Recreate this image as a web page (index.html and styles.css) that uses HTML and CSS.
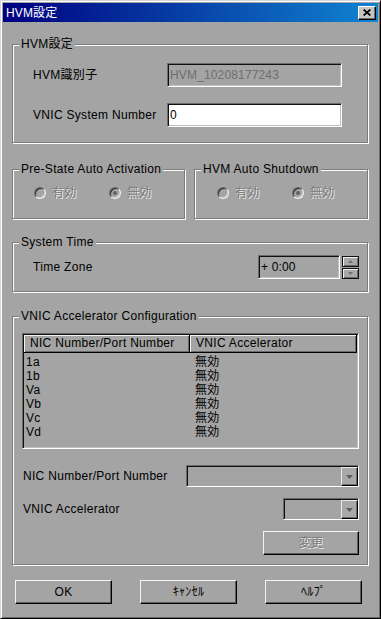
FILE: index.html
```html
<!DOCTYPE html>
<html lang="ja">
<head>
<meta charset="utf-8">
<title>HVM設定</title>
<link rel="stylesheet" href="styles.css">
</head>
<body>
<div class="window">
  <div class="titlebar">
    <span class="title">HVM設定</span>
    <div class="close"><svg width="8" height="7" viewBox="0 0 8 7"><path d="M0.6 0.5 L7.4 6.5 M7.4 0.5 L0.6 6.5" stroke="#000" stroke-width="1.7" fill="none"/></svg></div>
  </div>
  <div class="client">
    <div class="group g-hvm">
      <div class="gtitle">HVM設定</div>
      <div class="hvm-body">
        <div class="frow"><span class="flabel">HVM識別子</span><div class="field field-dis">HVM_10208177243</div></div>
        <div class="frow"><span class="flabel">VNIC System Number</span><div class="field field-white">0</div></div>
      </div>
    </div>

    <div class="pair">
      <div class="group g-left">
        <div class="gtitle">Pre-State Auto Activation</div>
        <div class="radios">
          <div class="ritem"><span class="rb"></span><span class="dis">有効</span></div>
          <div class="ritem"><span class="rb on"></span><span class="dis">無効</span></div>
        </div>
      </div>
      <div class="group g-right">
        <div class="gtitle">HVM Auto Shutdown</div>
        <div class="radios radios-r">
          <div class="ritem"><span class="rb"></span><span class="dis">有効</span></div>
          <div class="ritem"><span class="rb on"></span><span class="dis">無効</span></div>
        </div>
      </div>
    </div>

    <div class="group g-time">
      <div class="gtitle">System Time</div>
      <div class="time-body">
        <span class="tlabel">Time Zone</span>
        <div class="field tfield">+ 0:00</div>
        <div class="spin">
          <div class="sbtn"><svg width="5" height="3" viewBox="0 0 5 3"><path d="M0 3 L2.5 0 L5 3 Z" fill="#707070"/></svg></div>
          <div class="sbtn"><svg width="5" height="3" viewBox="0 0 5 3"><path d="M0 0 L5 0 L2.5 3 Z" fill="#707070"/></svg></div>
        </div>
      </div>
    </div>

    <div class="group g-acc">
      <div class="gtitle">VNIC Accelerator Configuration</div>
      <div class="acc-body">
        <div class="list">
          <div class="lhead">
            <div class="hcell hc1">NIC Number/Port Number</div>
            <div class="hcell hc2">VNIC Accelerator</div>
          </div>
          <div class="lrows">
            <div class="lrow"><span>1a</span><span>無効</span></div>
            <div class="lrow"><span>1b</span><span>無効</span></div>
            <div class="lrow"><span>Va</span><span>無効</span></div>
            <div class="lrow"><span>Vb</span><span>無効</span></div>
            <div class="lrow"><span>Vc</span><span>無効</span></div>
            <div class="lrow"><span>Vd</span><span>無効</span></div>
          </div>
        </div>
        <div class="crow crow1">
          <span class="clabel">NIC Number/Port Number</span>
          <div class="combo combo-wide"><div class="ddbtn"><svg width="7" height="4" viewBox="0 0 7 4"><path d="M0 0 L7 0 L3.5 4 Z" fill="#5c5c5c"/></svg></div></div>
        </div>
        <div class="crow crow2">
          <span class="clabel">VNIC Accelerator</span>
          <div class="combo combo-narrow"><div class="ddbtn"><svg width="7" height="4" viewBox="0 0 7 4"><path d="M0 0 L7 0 L3.5 4 Z" fill="#5c5c5c"/></svg></div></div>
        </div>
        <div class="brow">
          <div class="btn btn-change"><span class="dis">変更</span></div>
        </div>
      </div>
    </div>

    <div class="buttons">
      <div class="btn btn-main">OK</div>
      <div class="btn btn-main">ｷｬﾝｾﾙ</div>
      <div class="btn btn-main">ﾍﾙﾌﾟ</div>
    </div>
  </div>
</div>
</body>
</html>
```

FILE: styles.css
```css
* { box-sizing: border-box; }
html, body { margin: 0; padding: 0; }
body {
  width: 381px;
  height: 619px;
  background: #a4a4a4;
  color: #000;
  font-family: "Liberation Sans", "Noto Sans CJK JP", sans-serif;
  font-size: 12px;
  line-height: 14px;
  letter-spacing: 0.3px;
}

.window {
  width: 381px;
  height: 619px;
  background: #a4a4a4;
  border: 1px solid;
  border-color: #d6d6d6 #000 #000 #d6d6d6;
  box-shadow: inset 1px 1px 0 #fff, inset -1px -1px 0 #6a6a6a;
  padding: 2px;
  display: flex;
  flex-direction: column;
}

.titlebar {
  height: 19px;
  flex: none;
  background: linear-gradient(to right, #000080, #1084d0);
  display: flex;
  align-items: center;
  justify-content: space-between;
  padding: 0 2px 0 3px;
  color: #fff;
}
.title { line-height: 14px; letter-spacing: 0.15px; }
.close {
  width: 18px;
  height: 14px;
  background: #c4c4c4;
  border: 1px solid;
  border-color: #fff #000 #000 #fff;
  box-shadow: inset -1px -1px 0 #6a6a6a;
  display: flex;
  align-items: center;
  justify-content: center;
}
.close svg { display: block; }

.client {
  padding-left: 9px;
  display: flex;
  flex-direction: column;
}

.group {
  border: 1px solid #7c7c7c;
  box-shadow: inset 1px 1px 0 #fff, 1px 1px 0 #fff;
}
.gtitle {
  width: fit-content;
  margin: -8px 0 0 6px;
  padding: 0 2px;
  background: #a4a4a4;
  line-height: 14px;
  white-space: nowrap;
}

.g-hvm { width: 356px; margin-top: 22px; }
.hvm-body {
  padding: 12px 24px 15px 20px;
  display: flex;
  flex-direction: column;
  gap: 16px;
}
.frow { display: flex; align-items: center; height: 24px; }
.flabel { width: 134px; white-space: nowrap; }

.field {
  height: 24px;
  border: 1px solid;
  border-color: #6a6a6a #fff #fff #6a6a6a;
  box-shadow: inset 1px 1px 0 #101010, inset -1px -1px 0 #c0c0c0;
  padding: 0 0 0 2px;
  display: flex;
  align-items: center;
  white-space: nowrap;
  letter-spacing: 0.15px;
}
.field-dis { width: 175px; color: #6e6e6e; }
.field-white { width: 175px; background: #fff; }

.pair { display: flex; gap: 9px; margin-top: 26px; }
.g-left { width: 173px; }
.g-right { width: 174px; }
.radios { display: flex; padding: 10px 0 18px 21px; }
.radios-r { padding-left: 22px; }
.ritem { width: 76px; height: 14px; display: flex; align-items: center; gap: 6px; }
.rb {
  width: 12px;
  height: 12px;
  flex: none;
  border-radius: 50%;
  border: 1px solid;
  border-color: #6c6c6c #f4f4f4 #f4f4f4 #6c6c6c;
  box-shadow: inset 1px 1px 0 #2a2a2a, inset -1px -1px 0 #c4c4c4;
  background: #a4a4a4;
}
.rb.on::after {
  content: "";
  display: block;
  width: 4px;
  height: 4px;
  margin: 3px;
  border-radius: 50%;
  background: #646464;
}
.dis { color: #7a7a7a; text-shadow: 1px 1px 0 #ececec; }

.g-time { width: 356px; margin-top: 23px; }
.time-body {
  padding: 6px 8px 12px 20px;
  display: flex;
  align-items: flex-start;
  height: 42px;
}
.tlabel { flex: 1; line-height: 24px; }
.tfield { width: 82px; }
.spin {
  width: 17px;
  margin-left: 2px;
  margin-top: 1px;
  display: flex;
  flex-direction: column;
  gap: 1px;
}
.sbtn {
  height: 11px;
  border: 1px solid #111;
  background: #a8a8a8;
  box-shadow: inset 1px 1px 0 #f0f0f0, inset -1px -1px 0 #6a6a6a;
  display: flex;
  align-items: center;
  justify-content: center;
}
.sbtn svg { display: block; }

.g-acc { width: 356px; margin-top: 24px; }
.acc-body {
  padding: 10px 8px 9px 9px;
  display: flex;
  flex-direction: column;
}
.list {
  width: 337px;
  height: 116px;
  border: 1px solid;
  border-color: #6a6a6a #fff #fff #6a6a6a;
  box-shadow: inset 1px 1px 0 #101010, inset -1px -1px 0 #c0c0c0;
  padding: 1px;
}
.lhead { display: flex; height: 18px; }
.hcell {
  height: 18px;
  border-right: 1px solid #000;
  border-bottom: 1px solid #000;
  box-shadow: inset 1px 1px 0 #f4f4f4, inset -1px -1px 0 #6a6a6a;
  padding-left: 6px;
  line-height: 17px;
  white-space: nowrap;
}
.hc1 { width: 166px; }
.hc2 { flex: 1; }
.lrows { padding-top: 2px; }
.lrow {
  display: grid;
  grid-template-columns: 169px 1fr;
  height: 14px;
  padding-left: 2px;
  line-height: 14px;
}

.crow {
  display: flex;
  justify-content: space-between;
  align-items: center;
  height: 22px;
}
.crow1 { margin-top: 16px; }
.crow2 { margin-top: 11px; }
.clabel { padding-left: 1px; white-space: nowrap; }
.combo {
  height: 22px;
  border: 1px solid;
  border-color: #6a6a6a #fff #fff #6a6a6a;
  box-shadow: inset 1px 1px 0 #101010;
  display: flex;
  justify-content: flex-end;
  padding-top: 1px;
}
.combo-wide { width: 173px; }
.combo-narrow { width: 76px; }
.ddbtn {
  width: 17px;
  height: 100%;
  background: #a8a8a8;
  border: 1px solid;
  border-color: #e8e8e8 #000 #000 #e8e8e8;
  box-shadow: inset -1px -1px 0 #6a6a6a;
  display: flex;
  align-items: center;
  justify-content: center;
}
.ddbtn svg { display: block; }

.brow { display: flex; justify-content: flex-end; margin-top: 11px; }
.btn {
  height: 24px;
  border: 1px solid;
  border-color: #f4f4f4 #000 #000 #f4f4f4;
  box-shadow: inset -1px -1px 0 #5e5e5e;
  display: flex;
  align-items: center;
  justify-content: center;
  white-space: nowrap;
}
.btn-change { width: 96px; }

.buttons {
  display: flex;
  gap: 28px;
  margin-top: 15px;
  padding-left: 3px;
}
.btn-main { width: 97px; }
```
